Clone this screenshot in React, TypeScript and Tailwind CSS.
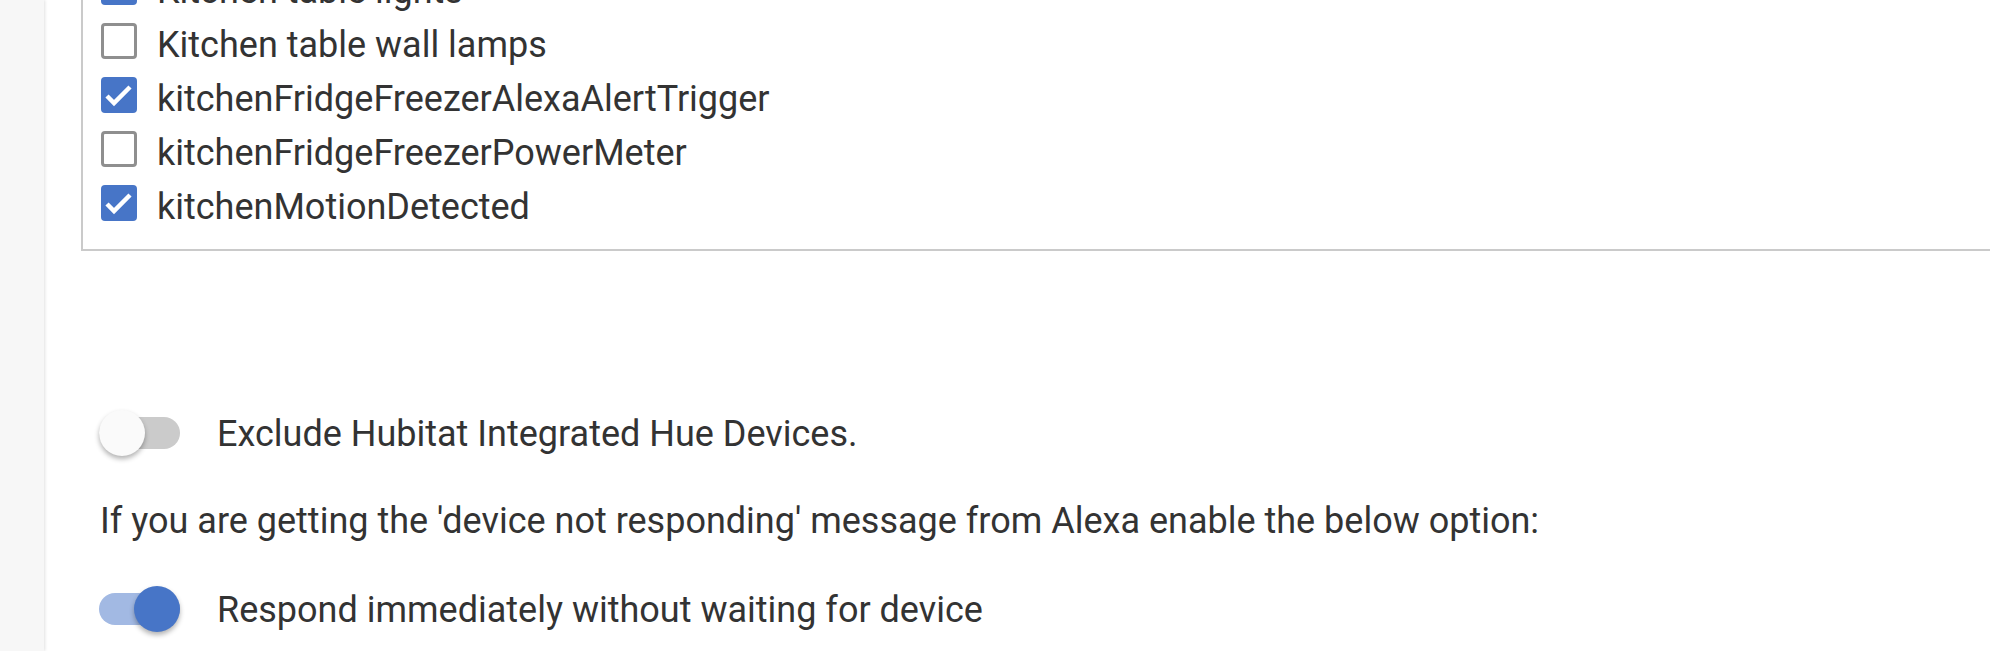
import React from 'react'

const devices = [
  { label: 'Kitchen table lights', checked: true },
  { label: 'Kitchen table wall lamps', checked: false },
  { label: 'kitchenFridgeFreezerAlexaAlertTrigger', checked: true },
  { label: 'kitchenFridgeFreezerPowerMeter', checked: false },
  { label: 'kitchenMotionDetected', checked: true },
]

function Checkbox({ checked }: { checked: boolean }) {
  if (checked) {
    return (
      <span className="flex h-[36px] w-[36px] shrink-0 items-center justify-center rounded-[4px] bg-[#4775c7]">
        <svg viewBox="0 0 36 36" className="h-[36px] w-[36px]">
          <polyline points="6,19 13,26 29,10" fill="none" stroke="white" strokeWidth="4.5" />
        </svg>
      </span>
    )
  }
  return <span className="h-[36px] w-[36px] shrink-0 rounded-[4px] border-[3px] border-[#8f8f8f] bg-white" />
}

function Toggle({ on }: { on: boolean }) {
  return (
    <span className="relative flex h-[46px] w-[81px] shrink-0 items-center">
      <span className={`h-[32px] w-[81px] rounded-full ${on ? 'bg-[#a2b9e3]' : 'bg-[#cbcbcb]'}`} />
      <span
        className={`absolute top-0 h-[46px] w-[46px] rounded-full shadow-[0_3px_5px_rgba(0,0,0,0.3)] ${
          on ? 'right-0 bg-[#4775c7]' : 'left-0 bg-[#fafafa]'
        }`}
      />
    </span>
  )
}

export default function App() {
  return (
    <div className="flex h-[651px] w-[1990px] overflow-hidden bg-white font-['Roboto',sans-serif] text-[#333333]">
      <div className="w-[44px] shrink-0 bg-[#f7f7f7] shadow-[1px_0_3px_rgba(0,0,0,0.12)]" />
      <div className="flex flex-1 flex-col pl-[37px]">
        <div className="-mt-[40px] w-[2000px] border-b-2 border-l-2 border-[#cacaca] pb-[19px] pl-[18px]">
          {devices.map((d) => (
            <div key={d.label} className="flex h-[54px] items-center gap-[20px]">
              <Checkbox checked={d.checked} />
              <span className="pt-[8px] text-[36px] leading-none">{d.label}</span>
            </div>
          ))}
        </div>

        <div className="ml-[18px] mt-[159px] flex h-[46px] items-center gap-[37px]">
          <Toggle on={false} />
          <span className="pt-[2px] text-[36px] leading-none">Exclude Hubitat Integrated Hue Devices.</span>
        </div>

        <p className="ml-[19px] mt-[42px] text-[36px] leading-[46px]">
          If you are getting the 'device not responding' message from Alexa enable the below option:
        </p>

        <div className="ml-[18px] mt-[42px] flex h-[46px] items-center gap-[37px]">
          <Toggle on={true} />
          <span className="pt-[2px] text-[36px] leading-none">Respond immediately without waiting for device</span>
        </div>
      </div>
    </div>
  )
}
